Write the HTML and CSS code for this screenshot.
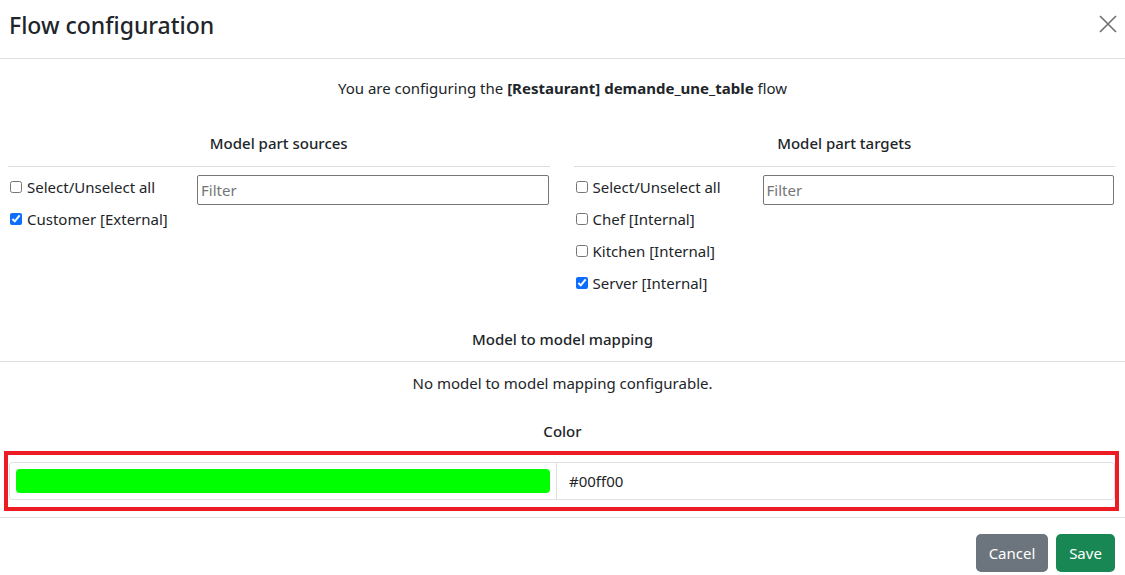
FILE: index.html
```html
<!DOCTYPE html>
<html lang="en">
<head>
<meta charset="utf-8">
<title>Flow configuration</title>
<link rel="stylesheet" href="styles.css">
</head>
<body>
<div class="modal">
  <div class="modal-header">
    <h5 class="modal-title">Flow configuration</h5>
    <button class="btn-close" aria-label="Close">
      <svg width="18" height="18" viewBox="0 0 18 18"><path d="M1 1L17 17M17 1L1 17" stroke="#6e6e6e" stroke-width="1.6" fill="none"/></svg>
    </button>
  </div>
  <div class="modal-body">
    <p class="intro">You are configuring the <b>[Restaurant] demande_une_table</b> flow</p>
    <div class="parts">
      <section class="part">
        <h6 class="section-title">Model part sources</h6>
        <hr class="rule">
        <div class="part-grid">
          <ul class="check-list">
            <li><label><input type="checkbox"> Select/Unselect all</label></li>
            <li><label><input type="checkbox" checked> Customer [External]</label></li>
          </ul>
          <input class="filter" type="text" placeholder="Filter">
        </div>
      </section>
      <section class="part">
        <h6 class="section-title">Model part targets</h6>
        <hr class="rule">
        <div class="part-grid">
          <ul class="check-list">
            <li><label><input type="checkbox"> Select/Unselect all</label></li>
            <li><label><input type="checkbox"> Chef [Internal]</label></li>
            <li><label><input type="checkbox"> Kitchen [Internal]</label></li>
            <li><label><input type="checkbox" checked> Server [Internal]</label></li>
          </ul>
          <input class="filter" type="text" placeholder="Filter">
        </div>
      </section>
    </div>
    <h6 class="section-title mapping-title">Model to model mapping</h6>
    <hr class="rule full">
    <p class="note">No model to model mapping configurable.</p>
    <h6 class="section-title color-title">Color</h6>
    <div class="highlight">
      <div class="color-group">
        <div class="swatch-cell"><span class="swatch"></span></div>
        <div class="hex-cell">#00ff00</div>
      </div>
    </div>
  </div>
  <div class="modal-footer">
    <button class="btn btn-secondary">Cancel</button>
    <button class="btn btn-success">Save</button>
  </div>
</div>
</body>
</html>
```
FILE: styles.css
```css
* { box-sizing: border-box; }
html, body {
  margin: 0;
  padding: 0;
  background: #fff;
}
body {
  font-family: "Noto Sans", "Open Sans", sans-serif;
  font-size: 15px;
  color: #212529;
}
.modal {
  width: 1125px;
  height: 575px;
  overflow: hidden;
  display: flex;
  flex-direction: column;
}
.modal-header {
  height: 59px;
  flex: none;
  padding: 0 8px 0 9px;
  display: flex;
  align-items: center;
  justify-content: space-between;
  border-bottom: 1px solid #dee2e6;
}
.modal-title {
  margin: 0;
  font-size: 23px;
  font-weight: 500;
  color: #212529;
  position: relative;
  top: -4px;
}
.btn-close {
  border: 0;
  background: none;
  padding: 0;
  width: 18px;
  height: 18px;
  position: relative;
  top: -5px;
  cursor: pointer;
}
.btn-close svg { display: block; }
.modal-body {
  padding: 0;
  flex: none;
}
.intro {
  margin: 18px 0 0;
  text-align: center;
  line-height: 22px;
}
.intro b { font-weight: 700; }
.parts {
  display: grid;
  grid-template-columns: 1fr 1fr;
  gap: 24px;
  padding: 0 10px 0 8px;
  margin-top: 33px;
}
.section-title {
  margin: 0;
  text-align: center;
  font-size: 15px;
  font-weight: 500;
  line-height: 22px;
}
.rule {
  margin: 12px 0 0;
  border: 0;
  border-top: 1px solid #dcdcdc;
  height: 0;
}
.part-grid {
  display: grid;
  grid-template-columns: 189px 1fr;
  margin-top: 8px;
}
.check-list {
  list-style: none;
  margin: 0;
  padding: 0;
}
.check-list li {
  height: 32px;
  line-height: 24px;
}
.check-list label {
  display: flex;
  align-items: center;
  gap: 5px;
  white-space: nowrap;
}
.check-list input {
  margin: 0 0 0 2px;
  width: 12px;
  height: 12px;
  accent-color: #0d6efd;
}
.filter {
  height: 30px;
  margin-right: 1px;
  border: 1px solid #767676;
  border-radius: 2px;
  padding: 0 3px;
  font: inherit;
  font-size: 15px;
  color: #212529;
}
.filter::placeholder { color: #757575; }
.mapping-title { margin-top: 25px; }
.rule.full { margin-top: 11px; }
.note {
  margin: 10px 0 0;
  text-align: center;
  line-height: 22px;
}
.color-title { margin-top: 26px; }
.highlight {
  margin: 9px 6px 0 4px;
  border: 4px solid #ed1c24;
  padding: 7px 0 0 1px;
  height: 60px;
}
.color-group {
  display: flex;
  height: 38px;
  border: 1px solid #dee2e6;
  border-radius: 3px;
}
.swatch-cell {
  width: 547px;
  border-right: 1px solid #dee2e6;
  padding: 6px;
  flex: none;
}
.swatch {
  display: block;
  height: 100%;
  background: #00ff00;
  border-radius: 4px;
}
.hex-cell {
  flex: 1;
  padding-left: 12px;
  display: flex;
  align-items: center;
  font-size: 15px;
}
.modal-footer {
  margin-top: 6px;
  border-top: 1px solid #dee2e6;
  display: flex;
  justify-content: flex-end;
  gap: 8px;
  padding: 16px 10px 0 0;
}
.btn {
  height: 38px;
  border: 0;
  border-radius: 5px;
  color: #fff;
  font: inherit;
  font-size: 15px;
  padding: 0 12px;
  cursor: pointer;
}
.btn-secondary { background: #6c757d; width: 72px; }
.btn-success { background: #198754; width: 59px; }
```
